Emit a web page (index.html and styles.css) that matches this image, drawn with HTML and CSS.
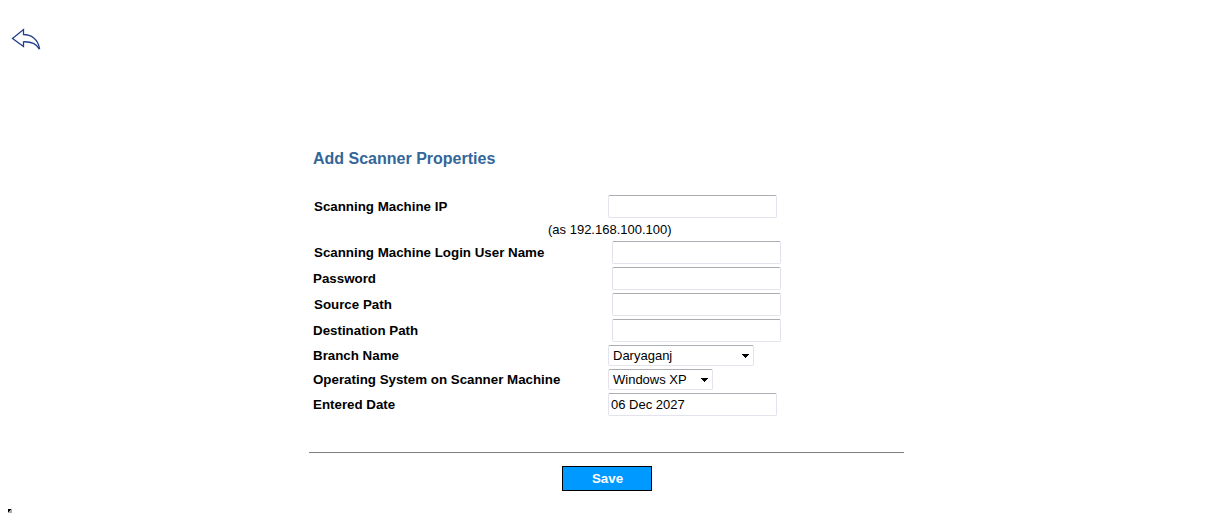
FILE: index.html
```
<!DOCTYPE html>
<html lang="en">
<head>
<meta charset="utf-8">
<title>Add Scanner Properties</title>
<link rel="stylesheet" href="styles.css">
</head>
<body>
<div class="page">
  <a class="back" href="#" aria-label="Back">
    <svg width="30" height="22" viewBox="0 0 30 22" fill="none" stroke="#1f3f8a" stroke-width="1.3"><path d="M1.500 10.500 L12.500 1.500 V6.500 C20 6.500 27 11 28.500 20.500 H27.800 C25 15.500 20 13.500 12.500 13.800 V18.500 Z"/></svg>
  </a>
  <form class="form">
    <h1 class="title">Add Scanner Properties</h1>
    <div class="row row-first"><label class="label inset">Scanning Machine IP</label><input class="field" type="text"></div>
    <div class="hint">(as 192.168.100.100)</div>
    <div class="row"><label class="label inset">Scanning Machine Login User Name</label><input class="field shifted" type="text"></div>
    <div class="row"><label class="label">Password</label><input class="field shifted" type="password"></div>
    <div class="row"><label class="label inset">Source Path</label><input class="field shifted" type="text"></div>
    <div class="row"><label class="label">Destination Path</label><input class="field shifted" type="text"></div>
    <div class="row row-select"><label class="label">Branch Name</label><div class="select branch"><span>Daryaganj</span><svg class="arrow" width="7" height="4" viewBox="0 0 7 4" shape-rendering="crispEdges"><path d="M0 0H7V1H6V2H5V3H4V4H3V3H2V2H1V1H0Z"/></svg></div></div>
    <div class="row row-select"><label class="label">Operating System on Scanner Machine</label><div class="select system"><span>Windows XP</span><svg class="arrow" width="7" height="4" viewBox="0 0 7 4" shape-rendering="crispEdges"><path d="M0 0H7V1H6V2H5V3H4V4H3V3H2V2H1V1H0Z"/></svg></div></div>
    <div class="row row-last"><label class="label">Entered Date</label><input class="field" type="text" value="06 Dec 2027"></div>
    <div class="rule"></div>
    <button class="save" type="button">Save</button>
  </form>
  <svg class="mark" width="4" height="4" viewBox="0 0 4 4" shape-rendering="crispEdges"><path fill="#aaa" d="M0 0H4V4H0Z"/><path d="M0 0H3V1H2V2H1V3H0Z"/></svg>
</div>
</body>
</html>
```
FILE: styles.css
```
* { box-sizing: border-box; }
body {
  margin: 0;
  background: #fff;
  color: #000;
  font-family: "Liberation Sans", Arial, sans-serif;
  font-size: 13px;
}
.page {
  display: flex;
  flex-direction: column;
  height: 521px;
  padding: 28px 0 0 11px;
}
.back { display: block; height: 22px; }
.back svg { display: block; }
.form {
  display: flex;
  flex-direction: column;
  width: 595px;
  margin: 99px 0 0 298px;
}
.title {
  margin: 0 0 26px 4px;
  color: #336699;
  font-size: 16px;
  line-height: 20px;
}
.row {
  display: flex;
  align-items: flex-start;
  height: 26px;
  line-height: 23px;
}
.row-first, .row-last { height: 23px; }
.row-select { height: 24px; line-height: 21px; }
.label {
  width: 299px;
  padding-left: 4px;
  font-size: 13.333px;
  font-weight: bold;
  white-space: nowrap;
}
.inset { padding-left: 5px; }
.field, .select {
  border: 1px solid #e3e3ed;
  border-top-color: #abadb3;
  border-radius: 2px;
  background: #fff;
}
.field {
  width: 169px;
  height: 23px;
  margin: 0;
  padding: 0 2px;
  font: 13px "Liberation Sans", Arial, sans-serif;
  outline: none;
}
.shifted { margin-left: 4px; }
.select {
  display: flex;
  align-items: center;
  justify-content: space-between;
  height: 21px;
  padding: 0 4px;
  line-height: 19px;
}
.branch { width: 146px; }
.system { width: 105px; }
.hint {
  height: 23px;
  line-height: 23px;
  padding-left: 239px;
}
.rule { height: 1px; margin-top: 36px; background: #808080; }
.save {
  width: 90px;
  height: 25px;
  margin: 13px 0 0 253px;
  padding: 0 0 0 1px;
  border: 1px solid #000;
  background: #0099ff;
  color: #fff;
  font: bold 13.333px "Liberation Sans", Arial, sans-serif;
}
.mark { display: block; margin: 18px 0 0 -3px; }
```
